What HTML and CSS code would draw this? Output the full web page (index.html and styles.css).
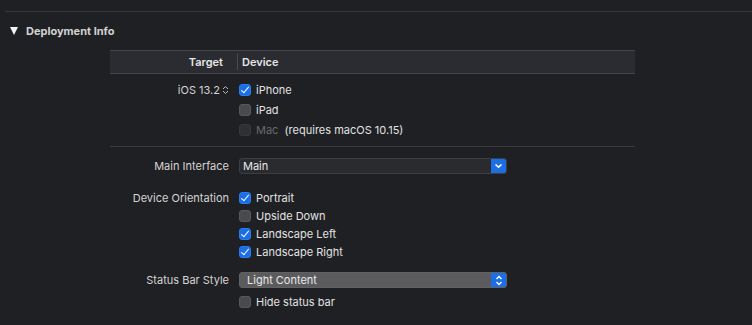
FILE: index.html
```html
<!DOCTYPE html>
<html>
<head>
    <title>Deployment Info</title>
    <link rel="stylesheet" href="styles.css">
</head>
<body>
    <div class="top-rule"></div>
    <div class="section-title">
        <span class="disclosure"></span>
        <span>Deployment Info</span>
    </div>

    <div class="panel">
        <div class="table-head">
            <div class="label">Target</div>
            <div class="head-sep"></div>
            <div class="head-device">Device</div>
        </div>

        <div class="group group-target">
            <div class="row">
                <div class="label">iOS 13.2
                    <svg class="stepper" width="7" height="10" viewBox="0 0 7 10">
                        <path d="M1 4 L3.5 1.5 L6 4 M1 6 L3.5 8.5 L6 6" fill="none" stroke="#bdbdbd" stroke-width="1"/>
                    </svg>
                </div>
                <div class="control"><span class="check on"></span>iPhone</div>
            </div>
            <div class="row">
                <div class="label"></div>
                <div class="control"><span class="check"></span>iPad</div>
            </div>
            <div class="row">
                <div class="label"></div>
                <div class="control"><span class="check disabled"></span><span class="muted">Mac</span>&nbsp;&nbsp;(requires macOS 10.15)</div>
            </div>
        </div>

        <div class="group group-info">
            <div class="row popup-row">
                <div class="label">Main Interface</div>
                <div class="control">
                    <div class="popup">
                        <span class="popup-text">Main</span>
                        <span class="popup-btn">
                            <svg width="9" height="6" viewBox="0 0 9 6"><path d="M1.5 1.5 L4.5 4.2 L7.5 1.5" fill="none" stroke="#fff" stroke-width="1.6"/></svg>
                        </span>
                    </div>
                </div>
            </div>

            <div class="orient">
                <div class="row short">
                    <div class="label">Device Orientation</div>
                    <div class="control"><span class="check on"></span>Portrait</div>
                </div>
                <div class="row short">
                    <div class="label"></div>
                    <div class="control"><span class="check"></span>Upside Down</div>
                </div>
                <div class="row short">
                    <div class="label"></div>
                    <div class="control"><span class="check on"></span>Landscape Left</div>
                </div>
                <div class="row short">
                    <div class="label"></div>
                    <div class="control"><span class="check on"></span>Landscape Right</div>
                </div>
            </div>

            <div class="row popup-row status">
                <div class="label">Status Bar Style</div>
                <div class="control">
                    <div class="popup gray">
                        <span class="popup-text">Light Content</span>
                        <span class="popup-btn">
                            <svg width="8" height="11" viewBox="0 0 8 11"><path d="M1.5 4 L4 1.5 L6.5 4 M1.5 7 L4 9.5 L6.5 7" fill="none" stroke="#fff" stroke-width="1.4"/></svg>
                        </span>
                    </div>
                </div>
            </div>
            <div class="row short">
                <div class="label"></div>
                <div class="control"><span class="check"></span>Hide status bar</div>
            </div>
        </div>
    </div>
</body>
</html>
```

FILE: styles.css
```css
body {
    margin: 0;
    background-color: #1f2023;
    font-family: Inter, "Noto Sans", sans-serif;
    font-size: 11px;
    color: #e2e2e2;
    height: 325px;
    overflow: hidden;
}

.top-rule {
    margin: 11px 0 0 5px;
    border-top: 1px solid #37383c;
}

.section-title {
    display: flex;
    align-items: center;
    height: 16px;
    margin-top: 11px;
    padding-left: 10px;
    font-weight: 700;
    color: #d2d2d2;
}

.disclosure {
    width: 0;
    height: 0;
    border-left: 4.5px solid transparent;
    border-right: 4.5px solid transparent;
    border-top: 8px solid #f2f2f2;
    margin-right: 8px;
}

.panel {
    width: 525px;
    margin: 11px 0 0 110px;
}

.table-head {
    display: flex;
    align-items: center;
    height: 22px;
    background-color: #2a2c31;
    border-top: 1px solid #45464b;
    border-bottom: 1px solid #45464b;
    font-weight: 600;
    color: #e6e6e6;
}

.table-head .label {
    width: 113px;
    text-align: right;
    color: #e6e6e6;
}

.head-sep {
    width: 1px;
    height: 16px;
    background-color: #4a4b50;
    margin-left: 14px;
}

.head-device {
    margin-left: 4px;
}

.group-target {
    padding: 6px 0;
    border-bottom: 1px solid #3a3b3f;
}

.group-info {
    padding-top: 9px;
}

.row {
    display: flex;
    align-items: center;
    height: 20px;
}

.row.short {
    height: 18px;
}

.orient {
    margin-top: 13px;
}

.status {
    margin-top: 9px;
    margin-bottom: 3px;
}

.label {
    width: 119px;
    text-align: right;
    color: #d4d4d4;
    display: flex;
    justify-content: flex-end;
    align-items: center;
}

.stepper {
    margin-left: 2px;
}

.control {
    margin-left: 10px;
    display: flex;
    align-items: center;
    flex: 1;
}

.check {
    display: inline-block;
    box-sizing: border-box;
    width: 12px;
    height: 12px;
    border-radius: 3px;
    background-color: #4a4a4d;
    border: 1px solid #58585b;
    margin-right: 5px;
    position: relative;
}

.check.on {
    background-color: #1c6ee6;
    border-color: #2a7af0;
}

.check.on::after {
    content: "";
    position: absolute;
    left: 3px;
    top: 0px;
    width: 3px;
    height: 7px;
    border-right: 1.6px solid #fff;
    border-bottom: 1.6px solid #fff;
    transform: rotate(40deg);
}

.check.disabled {
    background-color: #303033;
    border-color: #38383b;
}

.muted {
    color: #6a6a6c;
}

.popup {
    display: flex;
    width: 268px;
    height: 16px;
    box-sizing: border-box;
    border: 1px solid #3d3e42;
    border-radius: 3px;
    background-color: #2a2b2f;
    overflow: hidden;
}

.popup.gray {
    background-color: #5b5b5e;
    border-color: #626265;
}

.popup-text {
    flex: 1;
    line-height: 14px;
    padding-left: 3px;
    color: #e8e8e8;
}

.popup.gray .popup-text {
    padding-left: 7px;
}

.popup-btn {
    width: 15px;
    background-color: #1b6ee4;
    display: flex;
    align-items: center;
    justify-content: center;
}
```
